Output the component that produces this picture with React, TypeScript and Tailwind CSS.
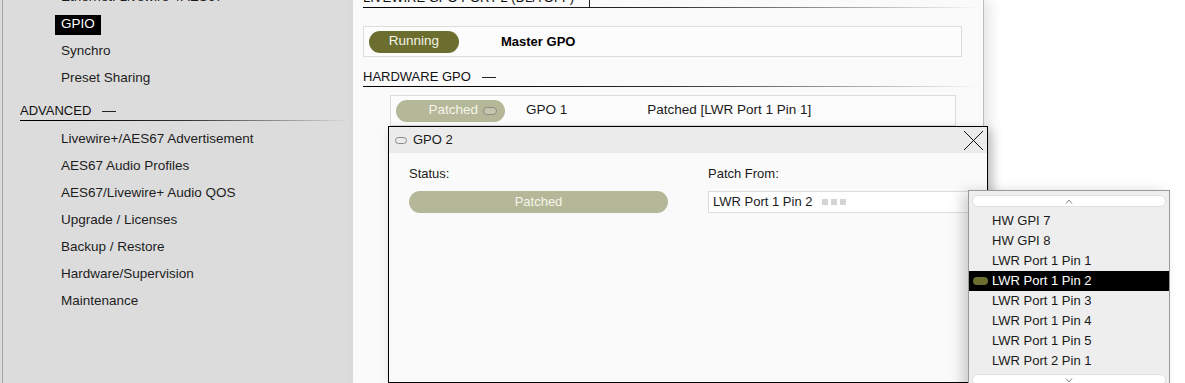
import React from 'react';

const font = { fontFamily: '"Liberation Sans", Arial, sans-serif' };

const generalItems = ['Ethernet: Livewire+/AES67', 'GPIO', 'Synchro', 'Preset Sharing'];
const advancedItems = [
  'Livewire+/AES67 Advertisement',
  'AES67 Audio Profiles',
  'AES67/Livewire+ Audio QOS',
  'Upgrade / Licenses',
  'Backup / Restore',
  'Hardware/Supervision',
  'Maintenance',
];
const sources = [
  'HW GPI 7',
  'HW GPI 8',
  'LWR Port 1 Pin 1',
  'LWR Port 1 Pin 2',
  'LWR Port 1 Pin 3',
  'LWR Port 1 Pin 4',
  'LWR Port 1 Pin 5',
  'LWR Port 2 Pin 1',
];

function SectionTitle({ label, caret }: { label: string; caret?: boolean }) {
  return (
    <div>
      <div className="h-[18px] flex items-center text-[13px] text-[#111] uppercase">
        <span>{label}</span>
        {caret ? (
          <span className="ml-[15px] w-px h-[18px] bg-[#222]" />
        ) : (
          <span className="ml-[11px] w-[14px] h-px bg-[#222]" />
        )}
      </div>
      <div className="h-px bg-gradient-to-r from-black via-[#333] to-transparent" />
    </div>
  );
}

function Sidebar() {
  return (
    <div className="w-[353px] shrink-0 h-full bg-[#dcdcdc] flex">
      <div className="w-[2px] shrink-0" />
      <div className="w-px shrink-0 bg-[#a3a3a3]" />
      <div className="flex-1 -mt-[16px] text-[13.5px] text-[#1c1c1c]">
        {generalItems.map(item => (
          <div key={item} className="h-[27px] flex items-center">
            {item === 'GPIO' ? (
              <span className="ml-[52px] h-[20px] px-[6px] bg-black text-white flex items-center">{item}</span>
            ) : (
              <span className="ml-[58px]">{item}</span>
            )}
          </div>
        ))}
        <div className="mt-[10px] ml-[17px] mr-[3px]">
          <SectionTitle label="Advanced" />
        </div>
        <div className="mt-[5px]">
          {advancedItems.map(item => (
            <div key={item} className="h-[27px] flex items-center">
              <span className="ml-[58px]">{item}</span>
            </div>
          ))}
        </div>
      </div>
    </div>
  );
}

function MainPanel() {
  return (
    <div className="relative z-10 w-[631px] shrink-0 h-full bg-[#fafafa] border-r border-[#bdbdbd] shadow-[6px_0_12px_rgba(0,0,0,0.10)]">
      <div className="-mt-[11px] pl-[10px] pr-[2px]">
        <SectionTitle label="Livewire GPO Port 2 (DLA Off)" caret />
        <div className="mt-[18px] mr-[19px] h-[31px] border border-[#dcdcdc] bg-[#fcfcfc] flex items-center pl-[5px]">
          <div className="w-[90px] h-[22px] rounded-full bg-[#6b6e2e] text-[#f4f4ea] text-[13.5px] flex items-center justify-center">
            Running
          </div>
          <span className="ml-[42px] text-[13px] font-bold text-black">Master GPO</span>
        </div>
        <div className="mt-[11px]">
          <SectionTitle label="Hardware GPO" />
        </div>
        <div className="mt-[8px] ml-[27px] mr-[25px] h-[31px] border border-[#dcdcdc] bg-[#fcfcfc] flex items-center pl-[5px] text-[13.5px] text-[#1a1a1a]">
          <div className="w-[109px] h-[22px] rounded-full bg-[#b5b898] text-[#f4f4ea] flex items-center justify-end pr-[8px] gap-[5px]">
            <span>Patched</span>
            <span className="w-[14px] h-[8px] rounded-full border border-[#8a8a80] bg-[#c4c6ad]" />
          </div>
          <span className="ml-[21px]">GPO 1</span>
          <span className="ml-[80px]">Patched [LWR Port 1 Pin 1]</span>
        </div>
      </div>
    </div>
  );
}

function GpoDialog() {
  return (
    <div className="absolute left-[388px] top-[126px] w-[600px] h-[257px] border border-black bg-[#fafafa] shadow-[4px_4px_10px_rgba(0,0,0,0.22)] z-20 text-[13px] text-[#1a1a1a]">
      <div className="h-[26px] bg-[#ebebeb] flex items-center pl-[6px] relative">
        <span className="w-[12px] h-[7px] rounded-full border border-[#888]" />
        <span className="ml-[6px]">GPO 2</span>
        <svg className="absolute right-[3px] top-[3px]" width="21" height="21" viewBox="0 0 21 21">
          <path d="M1 1 L20 20 M20 1 L1 20" stroke="#111" strokeWidth="1" fill="none" />
        </svg>
      </div>
      <div className="flex pl-[20px] pt-[12px]">
        <div className="w-[299px]">
          <div className="h-[18px] flex items-center">Status:</div>
          <div className="mt-[8px] w-[259px] h-[22px] rounded-full bg-[#b5b898] text-[#f4f4ea] flex items-center justify-center">
            Patched
          </div>
        </div>
        <div className="flex-1">
          <div className="h-[18px] flex items-center">Patch From:</div>
          <div className="mt-[8px] h-[22px] border border-[#dcdcdc] bg-white flex items-center pl-[4px]">
            <span>LWR Port 1 Pin 2</span>
            <span className="ml-[10px] flex gap-[3px]">
              <span className="w-[6px] h-[6px] bg-[#d4d4d4]" />
              <span className="w-[6px] h-[6px] bg-[#d4d4d4]" />
              <span className="w-[6px] h-[6px] bg-[#d4d4d4]" />
            </span>
          </div>
        </div>
      </div>
    </div>
  );
}

function SourceDropdown() {
  return (
    <div className="absolute left-[968px] top-[190px] w-[202px] h-[200px] border border-[#9a9a9a] bg-[#eeeeee] shadow-[-6px_2px_12px_rgba(0,0,0,0.18)] z-30 text-[13px] text-[#1a1a1a]">
      <div className="mx-[3px] mt-[4px] h-[12px] rounded-full bg-white border border-[#e0e0e0] flex items-center justify-center">
        <svg width="8" height="5" viewBox="0 0 8 5">
          <path d="M1 4.5 L4 1 L7 4.5" stroke="#888" strokeWidth="1" fill="none" />
        </svg>
      </div>
      <div className="mt-[4px]">
        {sources.map(s => {
          const selected = s === 'LWR Port 1 Pin 2';
          return (
            <div key={s} className={`h-[20px] flex items-center ${selected ? 'bg-black text-white' : ''}`}>
              <span className="w-[23px] flex justify-center">
                {selected && <span className="w-[15px] h-[8px] rounded-full bg-[#6b6e2e]" />}
              </span>
              <span>{s}</span>
            </div>
          );
        })}
      </div>
      <div className="mx-[3px] mt-[3px] h-[12px] rounded-full bg-white border border-[#e0e0e0] flex items-center justify-center">
        <svg width="8" height="5" viewBox="0 0 8 5">
          <path d="M1 0.5 L4 4 L7 0.5" stroke="#888" strokeWidth="1" fill="none" />
        </svg>
      </div>
    </div>
  );
}

export default function App() {
  return (
    <div className="relative w-[1185px] h-[383px] overflow-hidden bg-white flex" style={font}>
      <Sidebar />
      <MainPanel />
      <div className="flex-1 bg-white" />
      <GpoDialog />
      <SourceDropdown />
    </div>
  );
}
